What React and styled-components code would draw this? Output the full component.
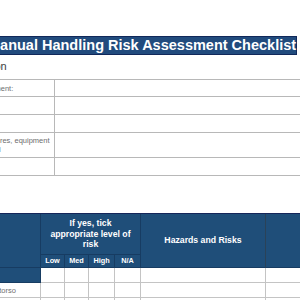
import React from 'react'
import styled, { createGlobalStyle } from 'styled-components'

const navy = '#1f4e79'
const navyLine = '#173c62'
const grid = '#c4c4c4'

const GlobalStyle = createGlobalStyle`
  html, body {
    margin: 0;
    padding: 0;
    background: #fff;
  }
  body {
    font-family: "Liberation Sans", Arial, sans-serif;
  }
`

const Page = styled.div`
  width: 300px;
  height: 300px;
  overflow: hidden;
  background: #fff;
`

// the sheet is wider than the window and scrolled a bit to the right
const Sheet = styled.div`
  width: 370px;
  margin-left: -30px;
  padding-top: 36px;
`

const TitleBar = styled.div`
  box-sizing: border-box;
  width: 327px;
  height: 19px;
  padding-left: 17px;
  background: #214b7d;
  border: 1px solid #10285a;
  color: #fff;
  font-size: 14.5px;
  font-weight: 700;
  line-height: 17px;
  white-space: nowrap;
`

const Subtitle = styled.div`
  margin-top: 5px;
  height: 13px;
  font-size: 11px;
  font-weight: 400;
  line-height: 13px;
  color: #3c3c3c;
`

const FormGrid = styled.div`
  display: grid;
  grid-template-columns: 85px 1fr;
  grid-template-rows: 17px 18px 18px 25px 18px;
  margin-top: 6px;
  border-top: 1px solid #b8b8b8;
`

const Label = styled.div`
  box-sizing: border-box;
  display: flex;
  align-items: center;
  padding-left: 2px;
  border-bottom: 1px solid #b8b8b8;
  border-right: 1px solid #b8b8b8;
  font-size: 7.5px;
  line-height: 9px;
  color: #6e6e6e;
`

const Field = styled.div`
  box-sizing: border-box;
  border-bottom: 1px solid #b8b8b8;
`

const Checklist = styled.div`
  display: grid;
  grid-template-columns: 71px 24px 24px 26px 26px 125px 74px;
  grid-template-rows: 41px 13px 15px 15px 15px;
  margin-top: 37px;
  border-top: 1px solid #15265a;
`

const Head = styled.div`
  box-sizing: border-box;
  display: flex;
  align-items: center;
  justify-content: center;
  text-align: center;
  background: ${navy};
  color: #fff;
  font-weight: 700;
  font-size: ${p => (p.small ? '7.3px' : '8.7px')};
  line-height: ${p => (p.small ? '12px' : '10.8px')};
  border-right: 1px solid ${p => (p.dark ? '#2a4258' : navyLine)};
  border-bottom: 1px solid ${navyLine};
  grid-column: ${p => p.col || 'auto'};
  grid-row: ${p => p.row || 'auto'};
`

const Cell = styled.div`
  box-sizing: border-box;
  display: flex;
  align-items: center;
  padding-left: 0;
  font-size: 7.5px;
  color: #6e6e6e;
  white-space: nowrap;
  background: ${p => (p.section ? navy : '#fff')};
  border-right: 1px solid ${p => (p.section ? navyLine : grid)};
  border-bottom: 1px solid ${p => (p.section ? navyLine : grid)};
`

const formRows = [
  ['Department:'],
  ['Date:'],
  ['Task:'],
  ['Procedures, equipment', 'provided'],
  ['Site:'],
]

const bodyRows = [
  { label: '', section: true },
  { label: 'Twisting torso' },
  { label: 'Stooping' },
]

export default function App() {
  return (
    <Page>
      <GlobalStyle />
      <Sheet>
        <TitleBar>Manual Handling Risk Assessment Checklist</TitleBar>
        <Subtitle>Section</Subtitle>

        <FormGrid>
          {formRows.map(lines => (
            <React.Fragment key={lines[0]}>
              <Label>
                <span>
                  {lines.map((l, i) => (
                    <React.Fragment key={l}>
                      {i > 0 && <br />}
                      {l}
                    </React.Fragment>
                  ))}
                </span>
              </Label>
              <Field />
            </React.Fragment>
          ))}
        </FormGrid>

        <Checklist>
          <Head col="1" row="1 / 3" />
          <Head col="2 / 6" row="1">If yes, tick<br />appropriate level of<br />risk</Head>
          <Head col="6" row="1 / 3" dark>Hazards and Risks</Head>
          <Head col="7" row="1 / 3" />
          {['Low', 'Med', 'High', 'N/A'].map(s => (
            <Head key={s} small row="2">{s}</Head>
          ))}
          {bodyRows.map(({ label, section }, r) => (
            <React.Fragment key={r}>
              <Cell section={section}>{label}</Cell>
              {[0, 1, 2, 3, 4, 5].map(c => <Cell key={c} />)}
            </React.Fragment>
          ))}
        </Checklist>
      </Sheet>
    </Page>
  )
}
